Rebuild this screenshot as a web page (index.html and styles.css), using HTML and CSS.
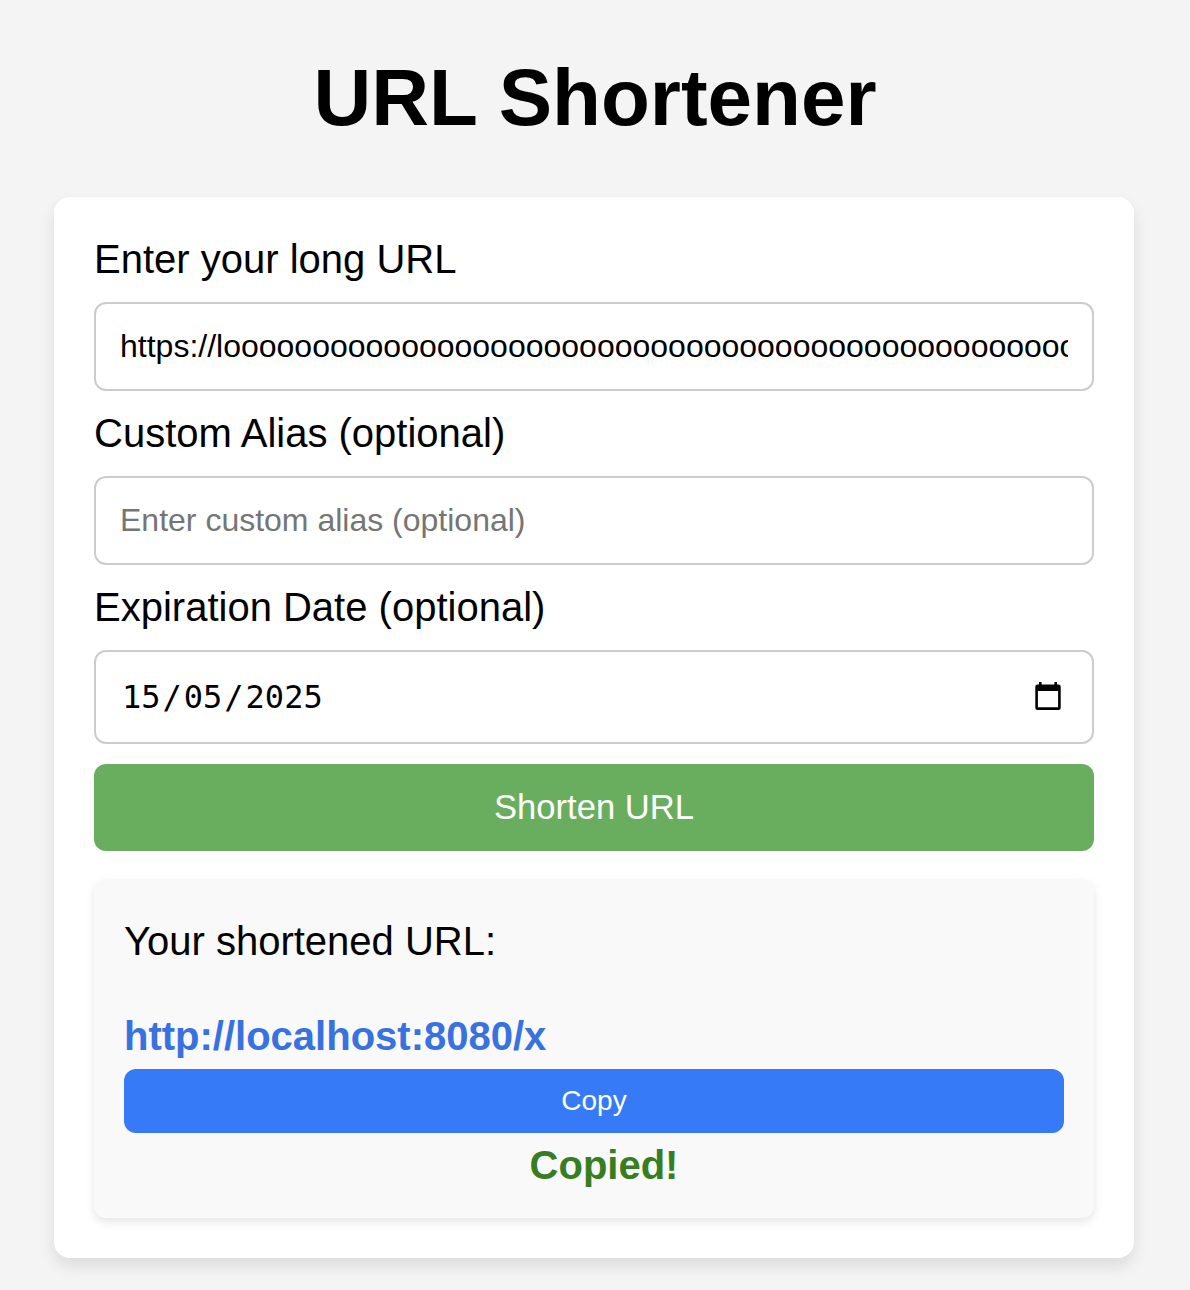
FILE: index.html
```html
<!DOCTYPE html>
<html lang="en">
<head>
<meta charset="utf-8">
<title>URL Shortener</title>
<link rel="stylesheet" href="styles.css">
</head>
<body>
<h1 class="title">URL Shortener</h1>
<main class="card">
  <label class="label" for="url">Enter your long URL</label>
  <input class="field" id="url" type="text" value="https://looooooooooooooooooooooooooooooooooooooooooooooooooooooooooooong.com">
  <label class="label" for="alias">Custom Alias (optional)</label>
  <input class="field" id="alias" type="text" placeholder="Enter custom alias (optional)">
  <label class="label">Expiration Date (optional)</label>
  <div class="field date">
    <span>15<span class="slash">/</span>05<span class="slash">/</span>2025</span>
    <svg class="calendar" viewBox="0 0 26 28" width="26" height="28"><path fill-rule="evenodd" d="M4 0h2.600v2.600h12.800V0H22v2.600h1.500A2.200 2.200 0 0 1 25.700 4.800v20.900a2.200 2.200 0 0 1-2.200 2.200h-21A2.200 2.200 0 0 1 .3 25.700V4.800a2.200 2.200 0 0 1 2.200-2.200H4zM2.900 9v16.300h20.200V9z"/></svg>
  </div>
  <button class="submit">Shorten URL</button>
  <section class="result">
    <p class="caption">Your shortened URL:</p>
    <a class="link">http://localhost:8080/x</a>
    <button class="copy">Copy</button>
    <p class="copied">Copied!</p>
  </section>
</main>
</body>
</html>
```
FILE: styles.css
```css
* { box-sizing: border-box; }
body {
  margin: 0;
  height: 1290px;
  overflow: hidden;
  background: #f4f4f4;
  color: #000;
  font-family: "Liberation Sans", Arial, sans-serif;
  font-size: 40px;
}
.title {
  margin: 0;
  padding: 52px 0 53px;
  font-size: 80px;
  line-height: 92px;
  text-align: center;
}
.card {
  display: flex;
  flex-direction: column;
  width: 1080px;
  height: 1061px;
  margin-left: 54px;
  padding: 39px 40px 40px;
  background: #fff;
  border-radius: 16px;
  box-shadow: 0 8px 16px rgba(0, 0, 0, .1);
}
.label { line-height: 46px; margin-bottom: 20px; }
.field {
  width: 100%;
  height: 89px;
  margin: 0 0 19px;
  padding: 0 24px;
  background: #fff;
  border: 2px solid #ccc;
  border-radius: 12px;
  color: #000;
  font-family: inherit;
  font-size: 32px;
}
.field::placeholder { color: #757575; }
.date {
  display: flex;
  align-items: center;
  justify-content: space-between;
  height: 94px;
  margin-bottom: 20px;
  padding: 0 31px 0 26px;
  font-family: "DejaVu Sans Mono", monospace;
}
.slash { margin: 0 2px; }
.calendar { margin-bottom: 2px; }
.submit, .copy {
  border: 0;
  border-radius: 12px;
  color: #fff;
  font-family: inherit;
}
.submit { height: 87px; padding: 0; background: #69ae5e; font-size: 34.6px; }
.result {
  display: flex;
  flex-direction: column;
  height: 339px;
  margin-top: 28px;
  padding: 0 30px;
  background: #f9f9f9;
  border-radius: 12px;
  box-shadow: 0 4px 8px rgba(0, 0, 0, .1);
}
.caption { margin: 39px 0 49px; line-height: 46px; }
.link { color: #3871e0; font-weight: bold; line-height: 46px; }
.copy { height: 64px; margin-top: 10px; background: #367af7; font-size: 28px; }
.copied {
  margin: 9px 0 0;
  padding-left: 20px;
  color: #377e22;
  font-weight: bold;
  line-height: 46px;
  text-align: center;
}
```
